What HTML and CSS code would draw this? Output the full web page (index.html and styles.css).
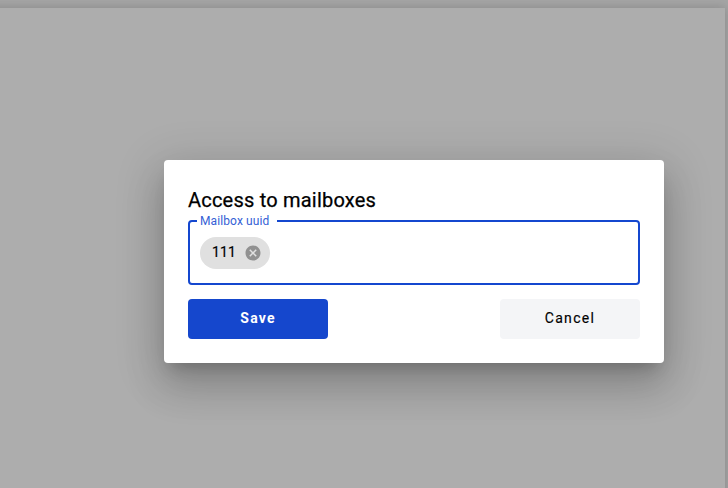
FILE: index.html
```html
<!DOCTYPE html>
<html lang="en">
<head>
<meta charset="utf-8">
<title>Access to mailboxes</title>
<link rel="stylesheet" href="styles.css">
</head>
<body>
<div class="page"><div class="sheet"></div></div>
<div class="overlay">
  <section class="dialog" role="dialog">
    <h2 class="title">Access to mailboxes</h2>
    <fieldset class="field">
      <legend class="label">Mailbox uuid</legend>
      <div class="chip"><span class="chip-text">111</span>
        <svg class="chip-remove" viewBox="0 0 24 24"><path d="M12 2C6.47 2 2 6.47 2 12s4.47 10 10 10 10-4.47 10-10S17.53 2 12 2zm5 13.59L15.59 17 12 13.41 8.41 17 7 15.59 10.59 12 7 8.41 8.41 7 12 10.59 15.59 7 17 8.41 13.41 12 17 15.59z"/></svg>
      </div>
    </fieldset>
    <div class="actions">
      <button class="button primary">Save</button>
      <button class="button">Cancel</button>
    </div>
  </section>
</div>
</body>
</html>
```
FILE: styles.css
```css
* { box-sizing: border-box; }
body { margin: 0; width: 728px; height: 488px; overflow: hidden; font-family: Roboto, sans-serif; background: #a5a5a5; }
.page { height: 488px; padding: 8px 3px 0 0; }
.sheet { height: 500px; margin-left: -20px; background: #adadad; box-shadow: 0 0 10px rgba(0,0,0,.18); }
.overlay { position: absolute; inset: 0; padding: 160px 0 0 164px; }
.dialog { width: 500px; height: 203px; padding: 24px; background: #fff; border-radius: 4px; box-shadow: 0 11px 15px -7px rgba(0,0,0,.2), 0 24px 38px 3px rgba(0,0,0,.14), 0 9px 46px 8px rgba(0,0,0,.12); }
.title { margin: 0; height: 30px; font-size: 20px; line-height: 32px; font-weight: 400; letter-spacing: .21px; color: #000; -webkit-text-stroke: .25px #000; }
.field { margin: 0; height: 71px; padding: 9px 10px; border: 2px solid #1447cf; border-radius: 4px; }
.label { margin-left: -3px; width: 80px; padding: 0 0 0 3px; height: 14px; font-size: 12px; line-height: 14px; letter-spacing: .1px; color: #355fd5; }
.chip { display: flex; align-items: center; width: 70px; height: 32px; padding: 0 8px 0 12px; border-radius: 16px; background: #e0e0e0; font-size: 14px; font-weight: 400; justify-content: space-between; }
.chip-text { margin-top: -2px; color: #000; letter-spacing: .1px; -webkit-text-stroke: .2px #000; }
.chip-remove { width: 18px; height: 18px; fill: #919191; }
.actions { display: flex; justify-content: space-between; margin-top: 14px; }
.button { width: 140px; height: 40px; padding: 0 0 2px; border: 0; border-radius: 4px; background: #f4f5f7; font: 400 14px Roboto, sans-serif; letter-spacing: 1.3px; color: #000; -webkit-text-stroke: .15px #000; }
.primary { background: #1547cd; color: #fff; font-weight: 700; letter-spacing: 1.2px; -webkit-text-stroke: 0; }
```
